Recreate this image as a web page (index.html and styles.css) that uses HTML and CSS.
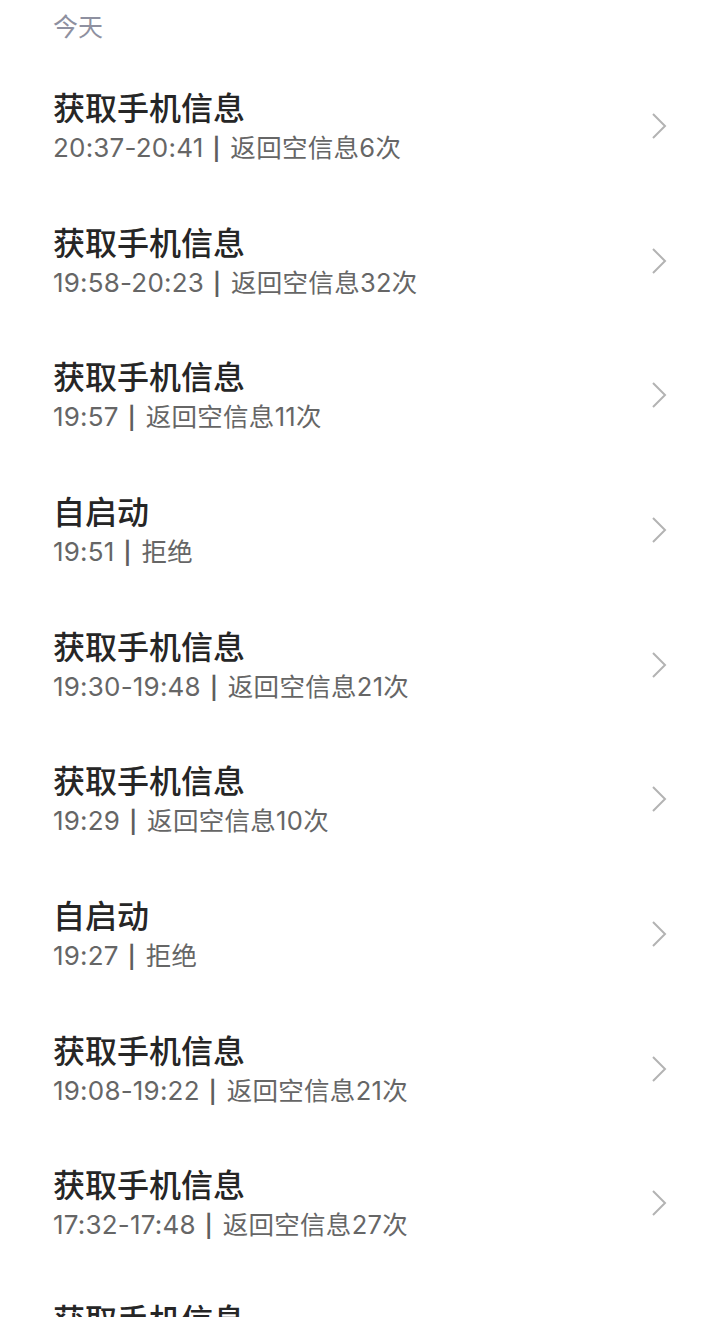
FILE: index.html
```html
<!DOCTYPE html>
<html lang="zh-CN">
<head>
<meta charset="utf-8">
<link rel="stylesheet" href="styles.css">
</head>
<body>
<div class="page">
  <div class="section-head">今天</div>
  <ul class="list">
    <li class="row"><div class="text"><div class="title">获取手机信息</div><div class="sub"><span class="time">20:37-20:41</span><span class="sep">|</span>返回空信息6次</div></div><svg class="chev" viewBox="0 0 16 28"><path d="M2 2 L14 14 L2 26"/></svg></li>
    <li class="row"><div class="text"><div class="title">获取手机信息</div><div class="sub"><span class="time">19:58-20:23</span><span class="sep">|</span>返回空信息32次</div></div><svg class="chev" viewBox="0 0 16 28"><path d="M2 2 L14 14 L2 26"/></svg></li>
    <li class="row"><div class="text"><div class="title">获取手机信息</div><div class="sub"><span class="time">19:57</span><span class="sep">|</span>返回空信息11次</div></div><svg class="chev" viewBox="0 0 16 28"><path d="M2 2 L14 14 L2 26"/></svg></li>
    <li class="row"><div class="text"><div class="title">自启动</div><div class="sub"><span class="time">19:51</span><span class="sep">|</span>拒绝</div></div><svg class="chev" viewBox="0 0 16 28"><path d="M2 2 L14 14 L2 26"/></svg></li>
    <li class="row"><div class="text"><div class="title">获取手机信息</div><div class="sub"><span class="time">19:30-19:48</span><span class="sep">|</span>返回空信息21次</div></div><svg class="chev" viewBox="0 0 16 28"><path d="M2 2 L14 14 L2 26"/></svg></li>
    <li class="row"><div class="text"><div class="title">获取手机信息</div><div class="sub"><span class="time">19:29</span><span class="sep">|</span>返回空信息10次</div></div><svg class="chev" viewBox="0 0 16 28"><path d="M2 2 L14 14 L2 26"/></svg></li>
    <li class="row"><div class="text"><div class="title">自启动</div><div class="sub"><span class="time">19:27</span><span class="sep">|</span>拒绝</div></div><svg class="chev" viewBox="0 0 16 28"><path d="M2 2 L14 14 L2 26"/></svg></li>
    <li class="row"><div class="text"><div class="title">获取手机信息</div><div class="sub"><span class="time">19:08-19:22</span><span class="sep">|</span>返回空信息21次</div></div><svg class="chev" viewBox="0 0 16 28"><path d="M2 2 L14 14 L2 26"/></svg></li>
    <li class="row"><div class="text"><div class="title">获取手机信息</div><div class="sub"><span class="time">17:32-17:48</span><span class="sep">|</span>返回空信息27次</div></div><svg class="chev" viewBox="0 0 16 28"><path d="M2 2 L14 14 L2 26"/></svg></li>
    <li class="row"><div class="text"><div class="title">获取手机信息</div></div></li>
  </ul>
</div>
</body>
</html>
```
FILE: styles.css
```css
html, body {
  margin: 0;
  padding: 0;
  background: #ffffff;
}
body {
  font-family: "Noto Sans CJK SC", "Noto Sans", sans-serif;
  overflow: hidden;
}
.page {
  width: 720px;
}
.section-head {
  height: 58.67px;
  box-sizing: border-box;
  padding: 0 53px;
  font-size: 25px;
  line-height: 50px;
  color: #8e90a0;
}
.list {
  list-style: none;
  margin: 0;
  padding: 0;
}
.row {
  height: 134.67px;
  box-sizing: border-box;
  padding: 0 53px;
  display: flex;
  align-items: center;
  justify-content: space-between;
}
.text {
  height: 80px;
  display: flex;
  flex-direction: column;
  justify-content: flex-start;
}
.title {
  font-size: 32px;
  line-height: 40px;
  font-weight: 500;
  color: #262626;
}
.sub {
  font-family: "Inter", "Noto Sans CJK SC", sans-serif;
  font-size: 25.5px;
  line-height: 40px;
  padding-top: 2px;
  color: #666666;
  letter-spacing: 0.3px;
}
.time {
  font-size: 26px;
  letter-spacing: 0.2px;
}
.sep {
  font-size: 22px;
  font-weight: 600;
  margin: 0 10px 0 9px;
  color: #5e5e5e;
  letter-spacing: 0;
}
.chev {
  width: 16px;
  height: 28px;
  fill: none;
  stroke: #b3b3b3;
  stroke-width: 2;
}
```
